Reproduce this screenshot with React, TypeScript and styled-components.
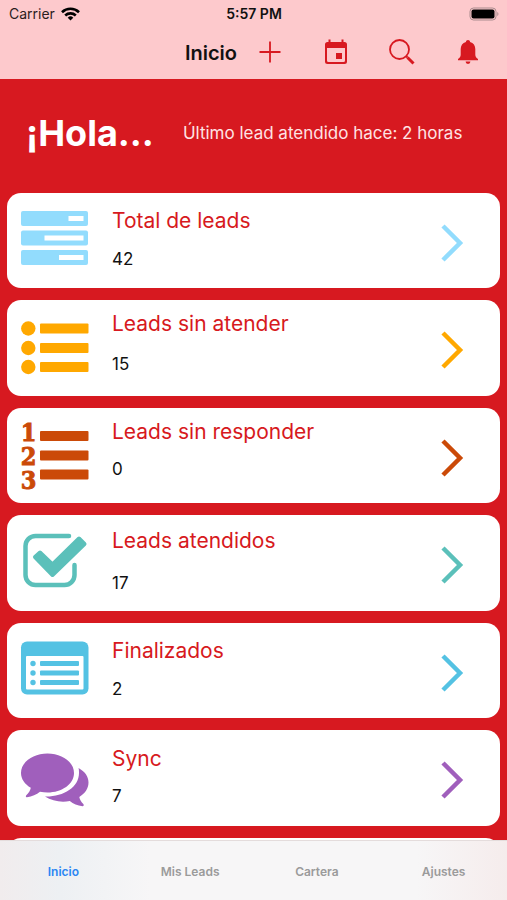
import React from "react";
import styled, { createGlobalStyle } from "styled-components";

const RED = "#d71920";

const GlobalStyle = createGlobalStyle`
  * { box-sizing: border-box; }
  body {
    margin: 0;
    background: ${RED};
    font-family: Inter, Roboto, "Liberation Sans", sans-serif;
    color: #111;
  }
`;

const Screen = styled.div`
  height: 100vh;
  display: flex;
  flex-direction: column;
  background: ${RED};
`;

const Header = styled.header`
  flex: none;
  background: #fdc9cc;
`;

const StatusBar = styled.div`
  display: grid;
  grid-template-columns: 1fr auto 1fr;
  align-items: center;
  height: 27px;
  padding: 0 8px 0 9px;
  font-size: 14px;
  line-height: 20px;
`;

const Carrier = styled.span`
  display: flex;
  align-items: center;
  gap: 6px;
  color: #2b1c1d;
`;

const Clock = styled.time`
  font-size: 14px;
  font-weight: 600;
`;

const Battery = styled.svg`
  justify-self: end;
`;

const NavBar = styled.div`
  display: grid;
  grid-template-columns: 237fr 270fr;
  align-items: center;
  height: 52px;
`;

const NavTitle = styled.h1`
  margin: 0;
  text-align: right;
  font-size: 20px;
  line-height: 28px;
  font-weight: 600;
`;

const Actions = styled.div`
  display: grid;
  grid-template-columns: repeat(4, 1fr);
  padding-right: 6px;
`;

const IconButton = styled.button`
  display: flex;
  align-items: center;
  justify-content: center;
  height: 44px;
  padding: 0 0 2px;
  border: 0;
  background: none;
  color: ${RED};
`;

const Main = styled.main`
  flex: 1;
  min-height: 0;
  overflow: hidden;
`;

const Greeting = styled.section`
  display: flex;
  align-items: center;
  gap: 29px;
  height: 114px;
  padding: 0 26px 6px;
  color: #fff;
`;

const Hello = styled.h2`
  margin: 0;
  font-size: 36px;
  line-height: 48px;
  font-weight: 700;
`;

const LastLead = styled.p`
  margin: 0;
  font-size: 17px;
  line-height: 24px;
  color: #ffe3e4;
  white-space: nowrap;
`;

const CardList = styled.ul`
  display: flex;
  flex-direction: column;
  gap: 12px;
  margin: 0;
  padding: 0 7px;
  list-style: none;
`;

const CardItem = styled.li`
  height: 95px;
  &:nth-child(even) { height: 96px; }
`;

const Card = styled.a`
  display: grid;
  grid-template-columns: 68px 1fr 24px;
  column-gap: 23px;
  align-items: start;
  height: 100%;
  padding: 0 36px 0 14px;
  border-radius: 14px;
  background: #fff;
  color: inherit;
  text-decoration: none;
`;

const CardIcon = styled.svg<{ $tint: string }>`
  display: block;
  margin-top: 14px;
  overflow: visible;
  color: ${(p) => p.$tint};
`;

const Chevron = styled.svg<{ $tint: string }>`
  display: block;
  margin-top: 30px;
  color: ${(p) => p.$tint};
`;

const CardText = styled.div<{ $top: number; $gap: number }>`
  display: grid;
  row-gap: ${(p) => p.$gap}px;
  padding-top: ${(p) => p.$top}px;
`;

const CardTitle = styled.span`
  font-size: 21px;
  line-height: 28px;
  color: ${RED};
`;

const CardCount = styled.span`
  font-size: 17px;
  line-height: 20px;
`;

const TabBar = styled.nav`
  flex: none;
  display: grid;
  grid-template-columns: repeat(4, 1fr);
  height: 60px;
  border-top: 1px solid #e4dcdc;
  background: linear-gradient(90deg, #f1eced 0, #edf0f3 60px, #f7f6f7 150px, #f7f6f7 calc(100% - 90px), #f5ecec 100%);
`;

const Tab = styled.a<{ $active?: boolean }>`
  display: flex;
  align-items: center;
  justify-content: center;
  padding-top: 3px;
  font-size: 12px;
  line-height: 16px;
  font-weight: 600;
  color: ${(p) => (p.$active ? "#2a86f3" : "#9b9b9b")};
  text-decoration: none;
`;

const ServersDrawing = () => (
  <>
    <g fill="currentColor">
      <rect x="0" y="4" width="67" height="15" rx="2" />
      <rect x="0" y="23.500" width="67" height="15" rx="2" />
      <rect x="0" y="43" width="67" height="15" rx="2" />
    </g>
    <g fill="#fff">
      <rect x="47.500" y="9" width="15" height="5" />
      <rect x="23.500" y="28.500" width="39" height="5" />
      <rect x="38" y="48" width="24.500" height="5" />
    </g>
  </>
);

const BulletsDrawing = () => (
  <g fill="currentColor">
    {[14.5, 34, 53].map((y) => (
      <g key={y}>
        <circle cx="7.300" cy={y} r="7.200" />
        <rect x="19" y={y - 5} width="48.500" height="10" rx="1" />
      </g>
    ))}
  </g>
);

const NumbersDrawing = () => (
  <g fill="currentColor">
    {[14, 33.5, 52.5].map((y, i) => (
      <g key={y}>
        <text
          x="7.500"
          y={19 + i * 24}
          fontSize="25"
          fontWeight="700"
          fontFamily='"DejaVu Serif Condensed", "DejaVu Serif", serif'
          textAnchor="middle"
          stroke="currentColor"
          strokeWidth="0.900"
        >
          {i + 1}
        </text>
        <rect x="19" y={y - 5} width="48.500" height="10" rx="1" />
      </g>
    ))}
  </g>
);

const CheckDrawing = () => (
  <>
    <path
      d="M48 7H14.500a10 10 0 0 0-10 10v29a10 10 0 0 0 10 10h29a10 10 0 0 0 10-10V36"
      fill="none"
      stroke="currentColor"
      strokeWidth="4.500"
      strokeLinecap="round"
    />
    <path
      d="M14 28L19 23.500L31.500 35.500L58 9.500L63.500 15L31.500 46Z"
      fill="currentColor"
      stroke="currentColor"
      strokeWidth="4"
      strokeLinejoin="round"
    />
  </>
);

const WindowDrawing = () => (
  <>
    <rect x="0" y="4.500" width="67.500" height="53" rx="6" fill="currentColor" />
    <rect x="5" y="19" width="57.500" height="33.500" rx="1" fill="#fff" />
    <g fill="currentColor">
      {[26.5, 36, 45.5].map((y) => (
        <g key={y}>
          <circle cx="12" cy={y} r="2.700" />
          <rect x="19" y={y - 2.5} width="39" height="5" rx="1" />
        </g>
      ))}
    </g>
  </>
);

const ChatDrawing = () => (
  <g fill="currentColor">
    <path d="M26.500 9.500C41 9.500 53 18 53 29S41 48.500 26.500 48.500C24 48.500 21.500 48.200 19 47.800C15.500 50.500 11 52.700 6 53.200C4.800 53.200 4.500 51.900 5.300 51.200C7.700 49 9.300 46.500 9.800 43.800C3.800 40.300 0 35 0 29C0 18 12 9.500 26.500 9.500Z" />
    <path d="M57.500 24C64 27.500 67.500 32.500 67.500 38.500C67.500 44.500 64 49.500 58.300 53C58.800 55.800 60.300 58 62.300 60C63.200 61 62.700 62.400 61.500 62.300C56.500 61.700 52.300 59.700 48.800 57C40 58.700 31 57 24 52.500C42 53 58 43.500 58 29C58 27.500 58 25.500 57.500 24Z" />
  </g>
);

const cards = [
  { title: "Total de leads", count: 42, tint: "#92dcfd", top: 14, gap: 14, Drawing: ServersDrawing },
  { title: "Leads sin atender", count: 15, tint: "#ffa800", top: 10, gap: 16, Drawing: BulletsDrawing },
  { title: "Leads sin responder", count: 0, tint: "#cb4a08", top: 10, gap: 13, Drawing: NumbersDrawing },
  { title: "Leads atendidos", count: 17, tint: "#5bc0ba", top: 12, gap: 18, Drawing: CheckDrawing },
  { title: "Finalizados", count: 2, tint: "#54c2e3", top: 14, gap: 14, Drawing: WindowDrawing },
  { title: "Sync", count: 7, tint: "#a05fbc", top: 15, gap: 13, Drawing: ChatDrawing },
];

const tabs = ["Inicio", "Mis Leads", "Cartera", "Ajustes"];

export default function App() {
  return (
    <Screen>
      <GlobalStyle />
      <Header>
        <StatusBar>
          <Carrier>
            Carrier
            <svg width="19" height="14" viewBox="0 0 19 14" fill="none" stroke="#000" strokeWidth="2.600" aria-hidden="true">
              <path d="M1 5.200a12.300 12.300 0 0 1 17 0" />
              <path d="M4.200 8.500a7.700 7.700 0 0 1 10.600 0" />
              <path d="M9.500 13.500L6.700 10.700a4 4 0 0 1 5.600 0Z" fill="#000" stroke="none" />
            </svg>
          </Carrier>
          <Clock>5:57 PM</Clock>
          <Battery width="30" height="14" viewBox="0 0 30 14" aria-hidden="true">
            <rect x="1" y="1" width="26" height="12" rx="3.500" fill="none" stroke="#a98b8d" />
            <rect x="2.500" y="2.500" width="23" height="9" rx="2" fill="#000" />
            <path d="M28.300 5v4c1.500-.5 1.500-3.500 0-4Z" fill="#a98b8d" />
          </Battery>
        </StatusBar>
        <NavBar>
          <NavTitle>Inicio</NavTitle>
          <Actions>
            <IconButton aria-label="Agregar">
              <svg width="22" height="22" viewBox="0 0 22 22" stroke="currentColor" strokeWidth="1.800">
                <path d="M11 0.500v21M0.500 11h21" />
              </svg>
            </IconButton>
            <IconButton aria-label="Calendario">
              <svg width="24" height="26" viewBox="0 0 24 26">
                <path
                  fill="currentColor"
                  fillRule="evenodd"
                  d="M4.500 0.500h2v2.500h11V0.500h2V3h1a2.500 2.500 0 0 1 2.500 2.500v17a2.500 2.500 0 0 1-2.500 2.500h-17A2.500 2.500 0 0 1 1 22.500v-17A2.500 2.500 0 0 1 3.500 3h1ZM3 9v12.500a1.500 1.500 0 0 0 1.500 1.500h15a1.500 1.500 0 0 0 1.500-1.500V9ZM12 14h6v6h-6Z"
                />
              </svg>
            </IconButton>
            <IconButton aria-label="Buscar">
              <svg width="26" height="26" viewBox="0 0 26 26" fill="none" stroke="currentColor">
                <circle cx="10.500" cy="10.500" r="9.500" strokeWidth="1.800" />
                <path d="M17 17l1.500 1.500" strokeWidth="2" />
                <path d="M18.500 18.500l6 6" strokeWidth="3" />
              </svg>
            </IconButton>
            <IconButton aria-label="Notificaciones">
              <svg width="20" height="24" viewBox="0 0 20 24" fill="currentColor">
                <path d="M10 0c1.200 0 2 .9 2.100 2C15.500 2.900 17.300 5.700 17.300 9v5.500c0 1.800.7 3.200 2.700 4.500v1.200H0V19c2-1.300 2.700-2.700 2.700-4.500V9c0-3.300 1.800-6.100 5.200-7C8 .9 8.800 0 10 0Z" />
                <path d="M7.600 21.500h4.800a2.400 2.400 0 0 1-4.800 0Z" />
              </svg>
            </IconButton>
          </Actions>
        </NavBar>
      </Header>
      <Main>
        <Greeting>
          <Hello>¡Hola...</Hello>
          <LastLead>Último lead atendido hace: 2 horas</LastLead>
        </Greeting>
        <CardList>
          {cards.map(({ title, count, tint, top, gap, Drawing }) => (
            <CardItem key={title}>
              <Card href="#">
                <CardIcon $tint={tint} width="68" height="68" viewBox="0 0 68 68" aria-hidden="true">
                  <Drawing />
                </CardIcon>
                <CardText $top={top} $gap={gap}>
                  <CardTitle>{title}</CardTitle>
                  <CardCount>{count}</CardCount>
                </CardText>
                <Chevron $tint={tint} width="24" height="40" viewBox="0 0 24 40" aria-hidden="true">
                  <path d="M3 3L20 20L3 37" fill="none" stroke="currentColor" strokeWidth="4.500" />
                </Chevron>
              </Card>
            </CardItem>
          ))}
          <CardItem>
            <Card as="div" />
          </CardItem>
        </CardList>
      </Main>
      <TabBar>
        {tabs.map((name, i) => (
          <Tab key={name} href="#" $active={i === 0}>
            {name}
          </Tab>
        ))}
      </TabBar>
    </Screen>
  );
}
